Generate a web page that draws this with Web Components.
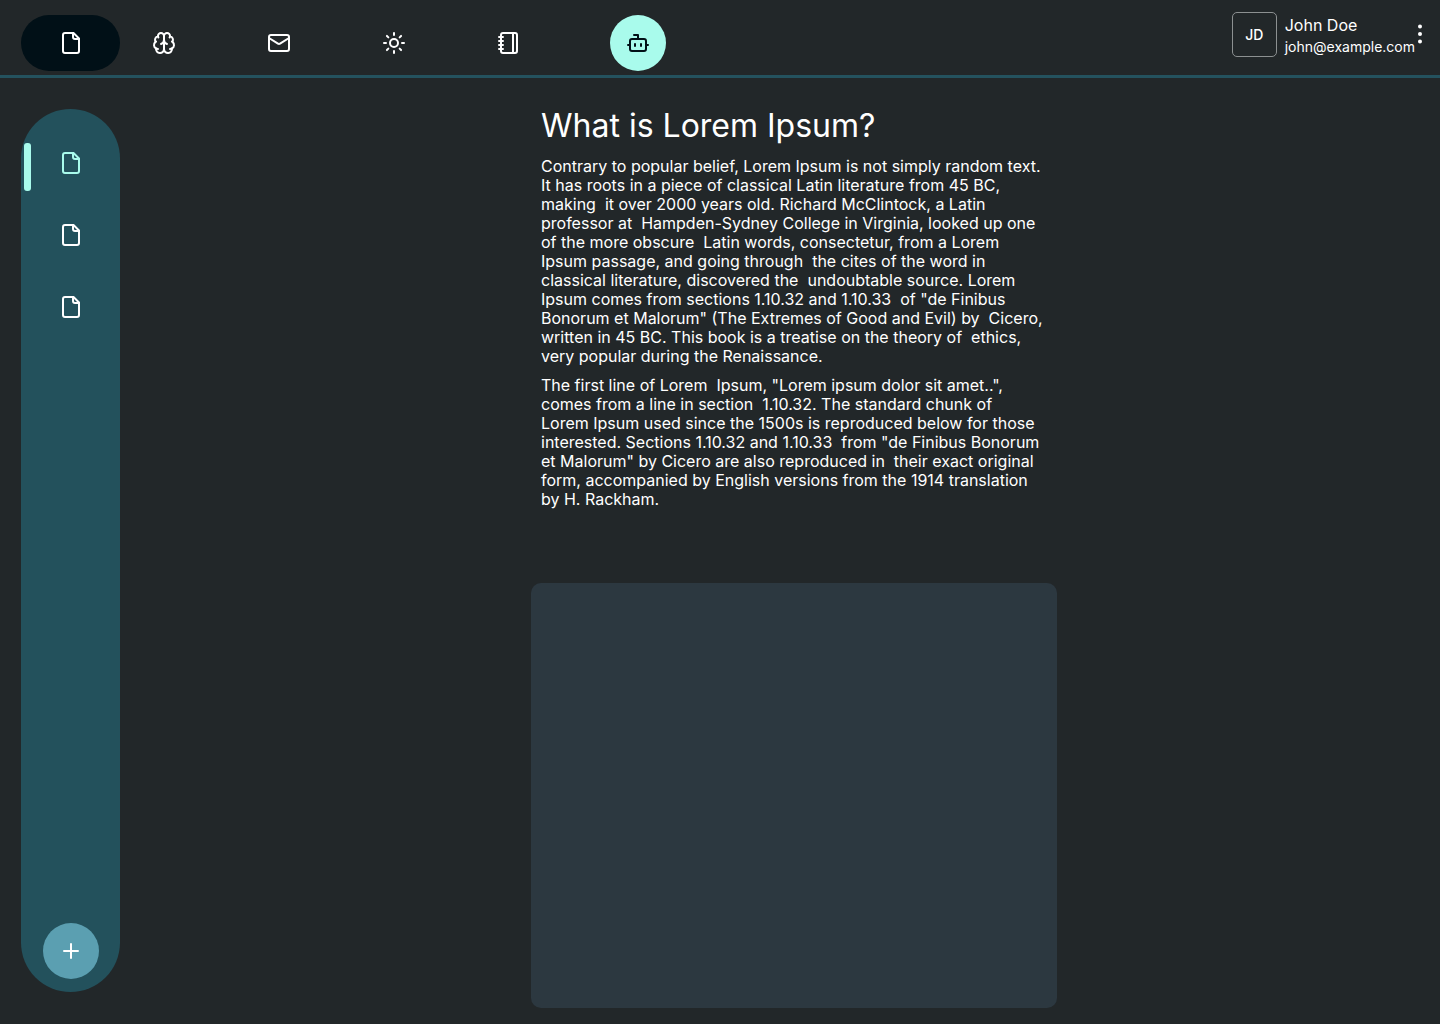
<!DOCTYPE html>
<html lang="en">
<head>
<meta charset="utf-8">
<title>Notes</title>
<style>
html { background: #222729; }
body { margin: 0; font-family: Inter, "Liberation Sans", sans-serif; color: #fff; }
</style>
</head>
<body>
<app-shell></app-shell>

<template id="shell-template">
<style>
:host { display: flex; flex-direction: column; min-height: 100vh; background: #222729; }
.body { flex: 1; display: flex; gap: 28px; padding-left: 21px; }
side-rail { margin: 31px 0 32px; }
main { flex: 1; display: flex; flex-direction: column; align-items: center; padding: 28px 0 16px; }
</style>
<top-bar>
  <nav-item label="Documents" icon="file" variant="current"></nav-item>
  <nav-item label="Ideas" icon="brain"></nav-item>
  <nav-item label="Mail" icon="mail"></nav-item>
  <nav-item label="Light mode" icon="sun"></nav-item>
  <nav-item label="Notebook" icon="notebook"></nav-item>
  <nav-item label="Assistant" icon="bot" variant="round" slot="assistant"></nav-item>
  <user-card slot="user" initials="JD">
    <span slot="name">John Doe</span>
    <span slot="email">john@example.com</span>
  </user-card>
</top-bar>
<div class="body">
  <side-rail></side-rail>
  <main>
    <text-article></text-article>
    <blank-panel></blank-panel>
  </main>
</div>
</template>

<template id="article-template">
<style>
:host { display: block; box-sizing: border-box; width: 100%; max-width: 526px; padding: 0 14px 0 10px; }
h1 { margin: 0 0 12px; font-size: 32px; line-height: 39px; font-weight: 400; }
p { margin: 0 0 10px; font-size: 16px; line-height: 19px; white-space: pre-wrap; }
p:last-child { margin: 0; }
</style>
<h1>What is Lorem Ipsum?</h1>
<p>Contrary to popular belief, Lorem Ipsum is not simply random text. It has roots in a piece of classical Latin literature from 45 BC, making  it over 2000 years old. Richard McClintock, a Latin professor at  Hampden-Sydney College in Virginia, looked up one of the more obscure  Latin words, consectetur, from a Lorem Ipsum passage, and going through  the cites of the word in classical literature, discovered the  undoubtable source. Lorem Ipsum comes from sections 1.10.32 and 1.10.33  of "de Finibus Bonorum et Malorum" (The Extremes of Good and Evil) by  Cicero, written in 45 BC. This book is a treatise on the theory of  ethics, very popular during the Renaissance.</p>
<p>The first line of Lorem  Ipsum, "Lorem ipsum dolor sit amet..", comes from a line in section  1.10.32. The standard chunk of Lorem Ipsum used since the 1500s is reproduced below for those interested. Sections 1.10.32 and 1.10.33  from "de Finibus Bonorum et Malorum" by Cicero are also reproduced in  their exact original form, accompanied by English versions from the 1914 translation by H. Rackham.</p>
</template>

<script>
const ICONS = {
  file: '<path d="M14.500 2H6a2 2 0 0 0-2 2v16a2 2 0 0 0 2 2h12a2 2 0 0 0 2-2V7.500Z"/><path d="M14 2v4a2 2 0 0 0 2 2h4"/>',
  brain: '<path d="M12 5a3 3 0 1 0-5.997.125 4 4 0 0 0-2.526 5.770 4 4 0 0 0 .556 6.588A4 4 0 1 0 12 18Z"/><path d="M12 5a3 3 0 1 1 5.997.125 4 4 0 0 1 2.526 5.770 4 4 0 0 1-.556 6.588A4 4 0 1 1 12 18Z"/><path d="M15 13a4.500 4.500 0 0 1-3-4 4.500 4.500 0 0 1-3 4"/><path d="M17.599 6.500a3 3 0 0 0 .399-1.375"/><path d="M6.003 5.125A3 3 0 0 0 6.401 6.500"/><path d="M3.477 10.896a4 4 0 0 1 .585-.396"/><path d="M19.938 10.500a4 4 0 0 1 .585.396"/><path d="M6 18a4 4 0 0 1-1.967-.516"/><path d="M19.967 17.484A4 4 0 0 1 18 18"/>',
  mail: '<rect x="2" y="4" width="20" height="16" rx="2"/><path d="m22 7-8.970 5.700a1.940 1.940 0 0 1-2.060 0L2 7"/>',
  sun: '<circle cx="12" cy="12" r="4"/><path d="M12 2v2M12 20v2M4.930 4.930l1.410 1.410M17.660 17.660l1.410 1.410M2 12h2M20 12h2M6.340 17.660l-1.410 1.410M19.070 4.930l-1.410 1.410"/>',
  notebook: '<path d="M2 6h4M2 10h4M2 14h4M2 18h4"/><rect x="4" y="2" width="16" height="20" rx="2"/><path d="M16 2v20"/>',
  bot: '<path d="M12 8V4H8"/><rect x="4" y="8" width="16" height="12" rx="2"/><path d="M2 14h2M20 14h2M15 13v2M9 13v2"/>',
  plus: '<path d="M5 12h14M12 5v14"/>'
};

class UiIcon extends HTMLElement {
  connectedCallback() {
    this.attachShadow({ mode: 'open' }).innerHTML = `
      <style>
        :host { display: block; width: 24px; height: 24px; }
        svg { display: block; width: 100%; height: 100%; fill: none; stroke: currentColor;
          stroke-width: 2; stroke-linecap: round; stroke-linejoin: round; }
      </style>
      <svg viewBox="0 0 24 24" aria-hidden="true">${ICONS[this.getAttribute('name')]}</svg>`;
  }
}

class NavItem extends HTMLElement {
  connectedCallback() {
    this.attachShadow({ mode: 'open' }).innerHTML = `
      <style>
        :host { display: block; width: 56px; height: 56px; }
        button { display: flex; align-items: center; justify-content: center; width: 100%; height: 100%;
          padding: 0; border: 0; border-radius: 28px; background: none; color: #fff; cursor: pointer; }
        :host([variant="current"]) { width: 99px; }
        :host([variant="current"]) button { background: #011017; }
        :host([variant="round"]) button { background: #a9fbec; color: #011017; }
        :host([variant="active"]) button { color: #a9fbec; }
        :host([variant="add"]) button { background: #5b9fb1; }
      </style>
      <button type="button" aria-label="${this.getAttribute('label')}"><ui-icon name="${this.getAttribute('icon')}"></ui-icon></button>`;
  }
}

class TopBar extends HTMLElement {
  connectedCallback() {
    this.attachShadow({ mode: 'open' }).innerHTML = `
      <style>
        :host { display: block; border-bottom: 3px solid #24525e; }
        header { display: flex; justify-content: space-between; align-items: flex-start; padding: 12px 15px 4px 21px; }
        nav { display: flex; gap: 73px; padding-top: 3px; }
        .items { display: flex; gap: 59px; }
        ::slotted([variant="current"]) { margin-right: -43px; }
      </style>
      <header>
        <nav aria-label="Main"><div class="items"><slot></slot></div><slot name="assistant"></slot></nav>
        <slot name="user"></slot>
      </header>`;
  }
}

class UserCard extends HTMLElement {
  connectedCallback() {
    this.attachShadow({ mode: 'open' }).innerHTML = `
      <style>
        :host { display: flex; }
        .avatar { box-sizing: border-box; width: 45px; height: 45px; margin-right: 8px; border: 1px solid #8c9091;
          border-radius: 5px; display: flex; align-items: center; justify-content: center;
          font-size: 14px; font-weight: 500; }
        .who { display: flex; flex-direction: column; gap: 2px; padding-top: 3px; }
        .name { font-size: 16px; line-height: 20px; }
        .email { font-size: 14px; line-height: 20px; }
        button { width: 10px; height: 44px; padding: 0; border: 0; background: none; color: #fff; cursor: pointer; }
        svg { display: block; margin: 0 auto; fill: currentColor; }
      </style>
      <div class="avatar">${this.getAttribute('initials')}</div>
      <div class="who"><div class="name"><slot name="name"></slot></div><div class="email"><slot name="email"></slot></div></div>
      <button type="button" aria-label="Account menu">
        <svg width="4" height="20" viewBox="0 0 4 20" aria-hidden="true"><circle cx="2" cy="2.500" r="2"/><circle cx="2" cy="10" r="2"/><circle cx="2" cy="17.500" r="2"/></svg>
      </button>`;
  }
}

class SideRail extends HTMLElement {
  connectedCallback() {
    this.attachShadow({ mode: 'open' }).innerHTML = `
      <style>
        :host { box-sizing: border-box; width: 99px; padding: 26px 0 13px; border-radius: 50px; background: #23515c;
          display: flex; flex-direction: column; align-items: center; justify-content: space-between; }
        ul { align-self: stretch; margin: 0; padding: 0; list-style: none; display: flex; flex-direction: column; gap: 16px; }
        li { position: relative; display: flex; justify-content: center; }
        li.on::before { content: ""; position: absolute; left: 3px; top: 8px; width: 7px; height: 48px; border-radius: 3px; background: #a9fbec; }
      </style>
      <ul>
        <li class="on"><nav-item label="Document 1" icon="file" variant="active"></nav-item></li>
        <li><nav-item label="Document 2" icon="file"></nav-item></li>
        <li><nav-item label="Document 3" icon="file"></nav-item></li>
      </ul>
      <nav-item label="Add document" icon="plus" variant="add"></nav-item>`;
  }
}

class TextArticle extends HTMLElement {
  connectedCallback() {
    this.attachShadow({ mode: 'open' }).append(document.getElementById('article-template').content.cloneNode(true));
  }
}

class BlankPanel extends HTMLElement {
  connectedCallback() {
    this.attachShadow({ mode: 'open' }).innerHTML = `
      <style>:host { display: block; flex: 1; width: 100%; max-width: 526px; margin-top: 74px; border-radius: 10px; background: #2c3840; }</style>
      <slot></slot>`;
  }
}

class AppShell extends HTMLElement {
  connectedCallback() {
    this.attachShadow({ mode: 'open' }).append(document.getElementById('shell-template').content.cloneNode(true));
  }
}

customElements.define('ui-icon', UiIcon);
customElements.define('nav-item', NavItem);
customElements.define('top-bar', TopBar);
customElements.define('user-card', UserCard);
customElements.define('side-rail', SideRail);
customElements.define('text-article', TextArticle);
customElements.define('blank-panel', BlankPanel);
customElements.define('app-shell', AppShell);
</script>
</body>
</html>
